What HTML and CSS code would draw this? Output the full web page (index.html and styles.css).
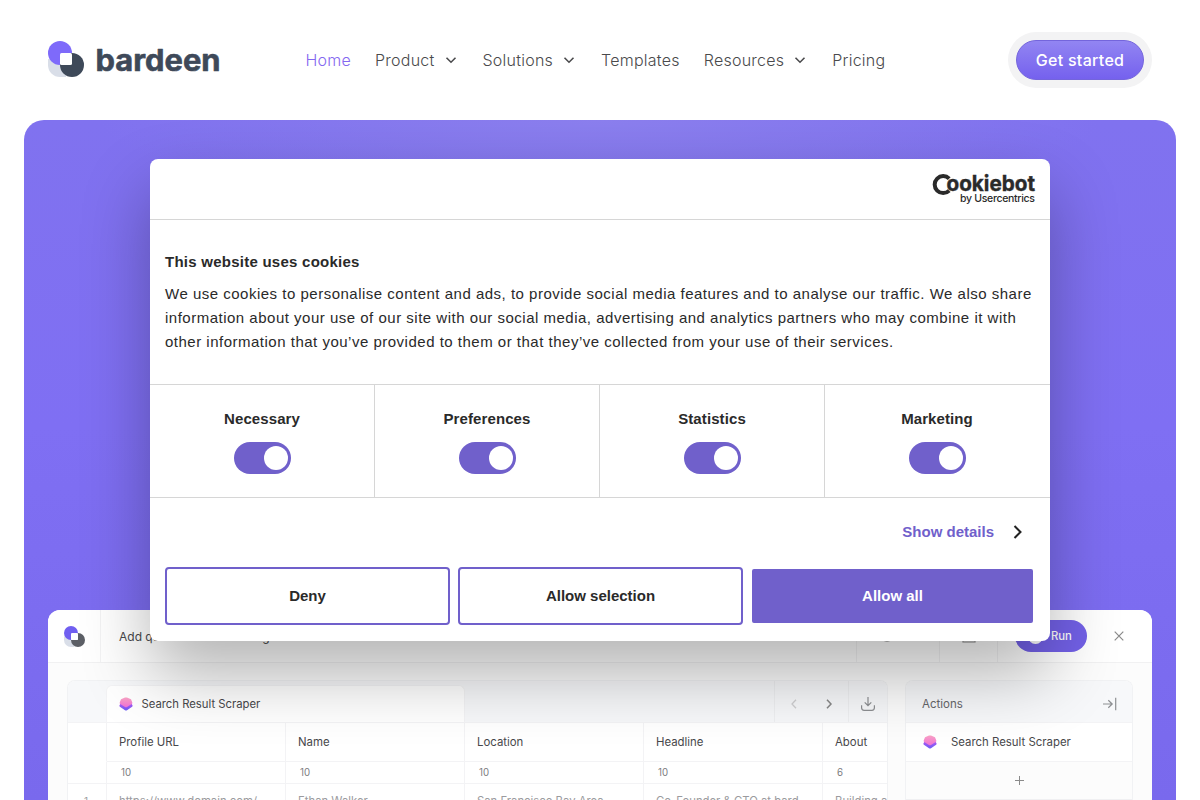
FILE: index.html
```html
<!DOCTYPE html>
<html lang="en">
<head>
  <meta charset="UTF-8">
  <meta name="viewport" content="width=device-width, initial-scale=1.0">
  <title>Bardeen</title>
  <link rel="stylesheet" href="styles.css">
</head>
<body>
  <!-- shared icons -->
  <svg class="sprite" width="0" height="0">
    <defs>
      <linearGradient id="scraper-top" x1="0" y1="0" x2="0" y2="1">
        <stop offset="0" stop-color="#f9a3c4"/>
        <stop offset="1" stop-color="#f272d6"/>
      </linearGradient>
      <linearGradient id="scraper-bottom" x1="0" y1="0" x2="0" y2="1">
        <stop offset="0" stop-color="#b45af0"/>
        <stop offset="1" stop-color="#6a5bf5"/>
      </linearGradient>
    </defs>
    <symbol id="chevron" viewBox="0 0 16 16">
      <path d="M3.500 5.800l4.500 4.400 4.500-4.400" fill="none" stroke="currentColor" stroke-width="1.600"/>
    </symbol>
    <symbol id="scraper" viewBox="0 0 14 14">
      <path d="M.5 8.200L2 6h10l1.500 2.200q.4.900-.4 1.600L8 13.300q-1 .5-2 0L.9 9.800Q.1 9.100.5 8.200z" fill="url(#scraper-bottom)"/>
      <path d="M6 .600q1-.4 2 0l4 1.700 1.300 3.200q.2 1-.6 1.500L8 10q-1 .5-2 0L1.300 7Q.5 6.500.7 5.500L2 2.300z" fill="url(#scraper-top)"/>
    </symbol>
  </svg>

  <header class="navbar">
    <a class="brand">
      <svg width="36" height="36" viewBox="0 0 36 36">
        <path d="M0 18h18v18H12A12 12 0 0 1 0 24z" fill="#d9dee8"/>
        <circle cx="12" cy="12" r="12" fill="#7e6afa"/>
        <circle cx="24" cy="24" r="12" fill="#3e4959"/>
        <rect x="12" y="12" width="12" height="12" rx="1.500" fill="#fff"/>
      </svg>
      <svg width="126" height="36" viewBox="0 0 126 36">
        <text class="brand-name" x="0.500" y="29.700" textLength="125" lengthAdjust="spacingAndGlyphs">bardeen</text>
      </svg>
    </a>
    <nav class="menu">
      <a class="active">Home</a>
      <a>Product<svg class="caret"><use href="#chevron"/></svg></a>
      <a>Solutions<svg class="caret"><use href="#chevron"/></svg></a>
      <a>Templates</a>
      <a>Resources<svg class="caret"><use href="#chevron"/></svg></a>
      <a>Pricing</a>
    </nav>
    <div class="cta"><a class="cta-button">Get started</a></div>
  </header>

  <main class="hero">
    <div class="app">
      <div class="app-bar">
        <div class="app-logo">
          <svg width="21" height="21" viewBox="0 0 36 36">
            <path d="M0 18h18v18H12A12 12 0 0 1 0 24z" fill="#d9dee8"/>
            <circle cx="12" cy="12" r="12" fill="#705ff0"/>
            <circle cx="24" cy="24" r="12" fill="#5c5f66"/>
            <rect x="12" y="12" width="12" height="12" rx="1.500" fill="#fff"/>
          </svg>
        </div>
        <div class="app-title">Add qualified leads testing</div>
        <div class="app-tool tool-wide">
          <svg width="14" height="14" viewBox="0 0 14 14"><circle cx="7" cy="6.200" r="6" fill="none" stroke="#999" stroke-width="1.200"/></svg>
        </div>
        <div class="app-tool">
          <svg width="14" height="14" viewBox="0 0 14 14"><rect x="1" y="1" width="12" height="12" fill="none" stroke="#999" stroke-width="1.200"/></svg>
        </div>
        <div class="app-run">
          <span class="run"><span class="run-dot"></span>Run</span>
          <svg width="10" height="10" viewBox="0 0 10 10"><path d="M.7.700l8.600 8.600M9.300.700L.7 9.300" stroke="#8a8a8a" stroke-width="1.200"/></svg>
        </div>
      </div>

      <div class="app-body">
        <section class="sheet">
          <div class="sheet-top">
            <div class="tab"><svg class="scraper"><use href="#scraper"/></svg>Search Result Scraper</div>
            <div class="pager">
              <svg width="8" height="12" viewBox="0 0 8 12"><path d="M6 1.700L2 6l4 4.300" fill="none" stroke="#cfcfd1" stroke-width="1.300"/></svg>
              <svg width="8" height="12" viewBox="0 0 8 12"><path d="M2 1.700L6 6l-4 4.300" fill="none" stroke="#888" stroke-width="1.500"/></svg>
            </div>
            <div class="download">
              <svg width="14" height="14" viewBox="0 0 14 14"><path d="M7 0v8.500M3.700 5.300L7 8.600l3.300-3.300M.6 8.200v2.600q0 2.500 2.500 2.500h7.800q2.500 0 2.500-2.500V8.200" fill="none" stroke="#8d8f92" stroke-width="1.200"/></svg>
            </div>
          </div>
          <div class="sheet-grid">
            <div></div><div class="head">Profile URL</div><div class="head">Name</div><div class="head">Location</div><div class="head">Headline</div><div class="head">About</div>
            <div class="no-line"></div><div class="count">10</div><div class="count">10</div><div class="count">10</div><div class="count">10</div><div class="count">6</div>
            <div class="index">1</div><div class="cell">https://www.domain.com/</div><div class="cell">Ethan Walker</div><div class="cell">San Francisco Bay Area</div><div class="cell">Co-Founder &amp; CTO at bard</div><div class="cell">Building a</div>
          </div>
        </section>

        <section class="actions">
          <div class="actions-top">
            Actions
            <svg width="14" height="14" viewBox="0 0 14 14"><path d="M0 7h9M5.300 3.200L9.200 7l-3.900 3.800M12.700.800v12.400" fill="none" stroke="#8d8f92" stroke-width="1.200"/></svg>
          </div>
          <div class="action"><svg class="scraper"><use href="#scraper"/></svg>Search Result Scraper</div>
          <div class="add">
            <svg width="9" height="9" viewBox="0 0 9 9"><path d="M4.500 0v9M0 4.500h9" stroke="#8a8a8a"/></svg>
          </div>
        </section>
      </div>
    </div>
  </main>

  <!-- cookie dialog -->
  <div class="cookie" role="dialog">
    <div class="cookie-header">
      <svg width="104" height="34" viewBox="0 0 104 34">
        <path d="M17.200 18.600A8.500 8.500 0 1 1 17.200 6.600" fill="none" stroke="#2a2a2a" stroke-width="4"/>
        <text class="cookie-logo" x="14.500" y="19" textLength="88.500" lengthAdjust="spacingAndGlyphs">ookiebot</text>
        <text class="cookie-by" x="28" y="30" textLength="75">by Usercentrics</text>
      </svg>
    </div>
    <div class="cookie-body">
      <h2>This website uses cookies</h2>
      <p>We use cookies to personalise content and ads, to provide social media features and to analyse our traffic. We also share information about your use of our site with our social media, advertising and analytics partners who may combine it with other information that you’ve provided to them or that they’ve collected from your use of their services.</p>
    </div>
    <div class="cookie-types">
      <div class="type">Necessary<span class="switch"></span></div>
      <div class="type">Preferences<span class="switch"></span></div>
      <div class="type">Statistics<span class="switch"></span></div>
      <div class="type">Marketing<span class="switch"></span></div>
    </div>
    <div class="cookie-details">
      <span>Show details</span>
      <svg width="10" height="14" viewBox="0 0 10 14"><path d="M1.500 1L7.500 7l-6 6" fill="none" stroke="#222" stroke-width="2"/></svg>
    </div>
    <div class="cookie-buttons">
      <button>Deny</button>
      <button>Allow selection</button>
      <button class="primary">Allow all</button>
    </div>
  </div>
</body>
</html>
```
FILE: styles.css
```css
* {
  box-sizing: border-box;
}
body {
  margin: 0;
  height: 800px;
  overflow: hidden;
  background: #fff;
  font-family: Inter, sans-serif;
}
.sprite {
  position: absolute;
}

/* navbar */
.navbar {
  display: flex;
  align-items: center;
  height: 120px;
  padding: 0 48px;
}
.brand {
  display: flex;
  align-items: center;
  gap: 11px;
  width: 257.5px;
  padding-bottom: 2px;
}
.brand-name {
  font-family: Inter, sans-serif;
  font-size: 30px;
  font-weight: 700;
  fill: #3e4959;
  stroke: #3e4959;
  stroke-width: 0.6px;
  stroke-linejoin: round;
}
.menu {
  display: flex;
  gap: 24px;
  font-size: 16px;
  font-weight: 300;
  letter-spacing: 0.24px;
  color: #4a4a4c;
}
.menu a {
  display: flex;
  align-items: center;
}
.menu .active {
  color: #8467f0;
}
.caret {
  width: 16px;
  height: 16px;
  margin-left: 8px;
}
.cta {
  margin-left: auto;
  padding: 8px;
  border-radius: 28px;
  background: #f3f3f4;
}
.cta-button {
  display: block;
  width: 128px;
  height: 40px;
  border-radius: 20px;
  border: 1px solid #7465dc;
  background: linear-gradient(#9285f2, #7561ee);
  color: #fff;
  font-size: 16px;
  font-weight: 500;
  line-height: 38px;
  letter-spacing: 0.3px;
  text-align: center;
}

/* hero */
.hero {
  height: 680px;
  margin: 0 24px;
  padding: 490px 24px 0;
  border-radius: 20px 20px 0 0;
  background: radial-gradient(ellipse 500px 90px at 50% 0, #8b7fee, rgba(139, 127, 238, 0)), linear-gradient(#8072ef, #7f6ff3 45%, #7969ed);
}
.app {
  height: 190px;
  border-radius: 12px 12px 0 0;
  background: #fcfcfc;
  overflow: hidden;
  color: #48484b;
  font-size: 12px;
}
.app-bar {
  display: flex;
  height: 53px;
  border-bottom: 1px solid #f1f1f2;
  background: #fff;
}
.app-bar > div {
  display: flex;
  align-items: center;
  border-right: 1px solid #f3f3f4;
}
.app-logo {
  width: 53px;
  padding-left: 16px;
}
.app-title {
  flex: 1;
  padding-left: 18px;
}
.app-tool {
  width: 58px;
  justify-content: center;
}
.app-tool.tool-wide {
  width: 83px;
  padding-right: 22px;
}
.app-bar .app-run {
  width: 154px;
  padding-left: 17px;
  border-right: 0;
}
.run {
  display: flex;
  align-items: center;
  gap: 8px;
  width: 72px;
  height: 32px;
  margin-right: 27px;
  padding-left: 13px;
  border-radius: 16px;
  background: #7361e8;
  color: #fff;
  font-size: 11.3px;
  font-weight: 500;
}
.run-dot {
  width: 15px;
  height: 15px;
  border-radius: 50%;
  background: #fff;
}
.app-body {
  display: flex;
  gap: 17px;
  padding: 17px 19px 0;
}
.sheet,
.actions {
  height: 120px;
  border: 1px solid #f1f2f4;
  border-bottom: 0;
  border-radius: 8px 8px 0 0;
  background: #fff;
  overflow: hidden;
}
.sheet {
  width: 821px;
}
.sheet-top {
  display: flex;
  height: 41px;
  background: #f7f8fa;
}
.tab {
  display: flex;
  align-items: center;
  gap: 9px;
  width: 359px;
  margin: 4px auto 0 38px;
  padding-left: 11.5px;
  border: 1px solid #f3f3f5;
  border-bottom: 0;
  border-radius: 6px 6px 0 0;
  background: #fff;
  font-size: 11.3px;
}
.scraper {
  width: 14px;
  height: 14px;
}
.pager,
.download {
  display: flex;
  align-items: center;
  border-left: 1px solid #eeeff1;
}
.pager {
  width: 74px;
  padding: 5px 0 0 15px;
  gap: 27px;
}
.download {
  width: 39px;
  padding: 4px 0 0 12px;
}
.sheet-grid {
  display: grid;
  grid-template-columns: 39px repeat(4, 179px) 65px;
  grid-template-rows: 39px 22px 18px;
}
.sheet-grid div {
  border-top: 1px solid #f3f3f5;
  border-right: 1px solid #f3f3f5;
  padding-left: 12px;
  overflow: hidden;
  white-space: nowrap;
}
.sheet-grid .no-line {
  border-top-color: transparent;
}
.sheet-grid .head {
  font-size: 11.4px;
  line-height: 38px;
}
.sheet-grid .count {
  padding-left: 14px;
  font-size: 9.7px;
  line-height: 21px;
  color: #7c7c80;
}
.sheet-grid .cell {
  font-size: 11.3px;
  line-height: 35px;
  color: #9b9b9e;
}
.sheet-grid .index {
  padding-left: 16px;
  font-size: 10px;
  line-height: 35px;
  color: #9b9b9e;
}
.actions {
  width: 228px;
}
.actions-top {
  display: flex;
  align-items: center;
  justify-content: space-between;
  height: 41px;
  padding: 5px 15px 0 16px;
  background: #f7f8fa;
  font-size: 11.5px;
  color: #66666a;
}
.action {
  display: flex;
  align-items: center;
  gap: 14px;
  height: 40px;
  padding: 0 0 1px 17px;
  border-top: 1px solid #f3f3f5;
  border-bottom: 1px solid #f3f3f5;
  font-size: 11.4px;
}
.add {
  display: flex;
  align-items: center;
  justify-content: center;
  height: 38px;
  border-bottom: 1px solid #f0f0f2;
  background: #fcfcfc;
}

/* cookie dialog */
.cookie {
  position: absolute;
  top: 159px;
  left: 150px;
  width: 900px;
  height: 482px;
  border-radius: 8px;
  background: #fff;
  box-shadow: 0 32px 68px rgba(0, 0, 0, 0.3);
  color: #2a2a2a;
  font-family: "Liberation Sans", Arial, sans-serif;
  font-size: 15px;
}
.cookie-header {
  display: flex;
  justify-content: flex-end;
  height: 61px;
  padding: 13px 14px 0;
  border-bottom: 1px solid #d6d6d6;
}
.cookie-logo {
  font: 700 21.5px Inter, sans-serif;
  fill: #2a2a2a;
  stroke: #2a2a2a;
  stroke-width: 0.4px;
}
.cookie-by {
  font: 500 10.5px Inter, sans-serif;
  fill: #2a2a2a;
}
.cookie-body {
  height: 164px;
  padding: 30px 15px 0;
}
.cookie-body h2 {
  margin: 0 0 8px;
  font-size: 15px;
  line-height: 24px;
  letter-spacing: 0.25px;
}
.cookie-body p {
  margin: 0;
  line-height: 24px;
  letter-spacing: 0.5px;
}
.cookie-types {
  display: grid;
  grid-template-columns: repeat(4, 1fr);
  height: 114px;
  border-top: 1px solid #d6d6d6;
  border-bottom: 1px solid #d6d6d6;
}
.type {
  display: flex;
  flex-direction: column;
  align-items: center;
  padding-top: 22px;
  border-right: 1px solid #d6d6d6;
  font-weight: bold;
  line-height: 24px;
  letter-spacing: 0.1px;
}
.type:last-child {
  border-right-color: transparent;
}
.switch {
  width: 57px;
  height: 32px;
  margin: 11px 0 0 1px;
  padding: 4px 3px;
  border-radius: 16px;
  background: #7060cb;
}
.switch::after {
  content: "";
  display: block;
  width: 24px;
  height: 24px;
  margin-left: auto;
  border-radius: 50%;
  background: #fff;
}
.cookie-details {
  display: flex;
  align-items: center;
  justify-content: flex-end;
  gap: 19px;
  height: 68px;
  padding-right: 27px;
  color: #7060cb;
  font-weight: bold;
}
.cookie-details span {
  padding-bottom: 2px;
}
.cookie-buttons {
  display: flex;
  gap: 8px;
  padding: 1px 15px 0;
}
.cookie-buttons button {
  width: 285px;
  height: 58px;
  padding: 0 6px 2px;
  border: 2px solid #7060cb;
  border-radius: 4px;
  background: #fff;
  color: #2a2a2a;
  font: bold 15px "Liberation Sans", Arial, sans-serif;
}
.cookie-buttons .primary {
  width: 281px;
  height: 54px;
  margin: 2px 0 0 1px;
  border-radius: 2px;
  background: #7060cb;
  color: #fff;
}
```
